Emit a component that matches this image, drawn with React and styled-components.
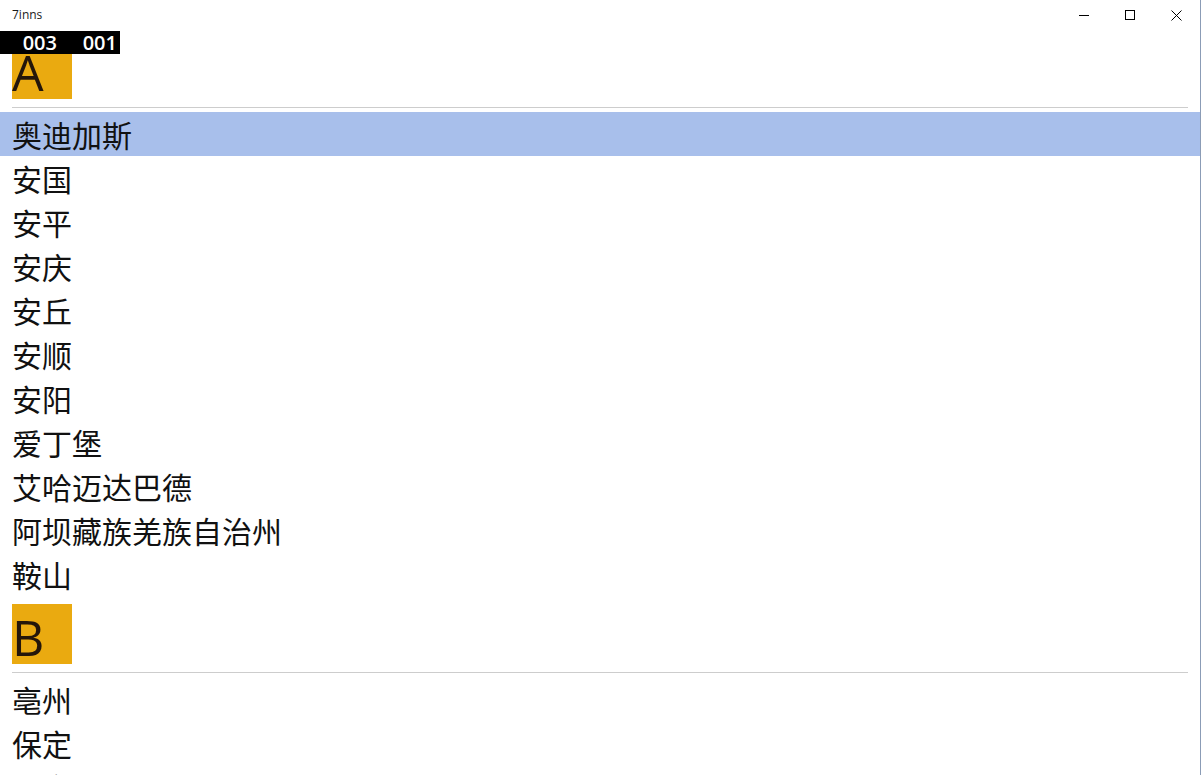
import React, { useState } from "react";
import styled, { createGlobalStyle } from "styled-components";

const GlobalStyle = createGlobalStyle`
  html, body {
    margin: 0;
    padding: 0;
    background: #ffffff;
    overflow: hidden;
  }
  * {
    box-sizing: border-box;
  }
`;

const Window = styled.div`
  width: 1201px;
  height: 775px;
  position: relative;
  overflow: hidden;
  background: #ffffff;
  border-right: 1px solid #8b9cb6;
  font-family: "Noto Sans CJK SC", "Noto Sans", sans-serif;
`;

const TitleBar = styled.div`
  height: 31px;
  display: flex;
  align-items: center;
  justify-content: space-between;
`;

const Title = styled.div`
  padding-left: 12px;
  padding-bottom: 2px;
  font-family: "Open Sans", "Noto Sans", sans-serif;
  font-size: 12px;
  color: #1a1a1a;
`;

const Controls = styled.div`
  display: flex;
  height: 31px;
  margin-right: 1px;
`;

const ControlBtn = styled.div`
  width: 46px;
  height: 30px;
  display: flex;
  align-items: center;
  justify-content: center;
`;

const Counter = styled.div`
  position: absolute;
  top: 31px;
  left: 0;
  width: 120px;
  height: 23px;
  background: #000000;
  display: flex;
  z-index: 5;
`;

const CounterCell = styled.div`
  width: 60px;
  text-align: right;
  padding-right: 3px;
  color: #ffffff;
  font-family: "Open Sans", "Noto Sans", sans-serif;
  font-weight: 600;
  font-size: 20px;
  line-height: 23px;
`;

const List = styled.div`
  display: flex;
  flex-direction: column;
`;

const GroupHeader = styled.div`
  padding: 8px 12px 4px 12px;
  display: flex;
  flex-direction: column;
  gap: 8px;
`;

const LetterBox = styled.div`
  width: 60px;
  height: 60px;
  background: #eaaa10;
  color: #24160a;
  font-family: "Open Sans", "Noto Sans", sans-serif;
  font-size: 50px;
  line-height: 1;
  display: flex;
  align-items: flex-end;
  padding-left: 0px;
  padding-bottom: 2px;
`;

const Rule = styled.div`
  height: 1px;
  background: #cdcdcd;
`;

const Row = styled.div`
  height: 44px;
  padding-left: 12px;
  display: flex;
  align-items: center;
  font-size: 30px;
  color: #111111;
  background: ${(p) => (p.selected ? "#a8bfeb" : "transparent")};
`;

const groups = [
  {
    letter: "A",
    items: [
      "奥迪加斯",
      "安国",
      "安平",
      "安庆",
      "安丘",
      "安顺",
      "安阳",
      "爱丁堡",
      "艾哈迈达巴德",
      "阿坝藏族羌族自治州",
      "鞍山",
    ],
  },
  {
    letter: "B",
    items: ["亳州", "保定", "北京", "包头"],
  },
];

const MinIcon = () => (
  <svg width="10" height="10" viewBox="0 0 10 10">
    <line x1="0" y1="5.5" x2="10" y2="5.5" stroke="#000" strokeWidth="1" />
  </svg>
);

const MaxIcon = () => (
  <svg width="10" height="10" viewBox="0 0 10 10">
    <rect x="0.5" y="0.5" width="9" height="9" fill="none" stroke="#000" strokeWidth="1" />
  </svg>
);

const CloseIcon = () => (
  <svg width="11" height="11" viewBox="0 0 11 11">
    <path d="M0.5 0.5 L10.5 10.5 M10.5 0.5 L0.5 10.5" stroke="#000" strokeWidth="1" />
  </svg>
);

const App = () => {
  const [selected, setSelected] = useState("奥迪加斯");

  return (
    <Window>
      <GlobalStyle />
      <TitleBar>
        <Title>7inns</Title>
        <Controls>
          <ControlBtn>
            <MinIcon />
          </ControlBtn>
          <ControlBtn>
            <MaxIcon />
          </ControlBtn>
          <ControlBtn>
            <CloseIcon />
          </ControlBtn>
        </Controls>
      </TitleBar>
      <Counter>
        <CounterCell>003</CounterCell>
        <CounterCell>001</CounterCell>
      </Counter>
      <List>
        {groups.map((g) => (
          <React.Fragment key={g.letter}>
            <GroupHeader>
              <LetterBox>{g.letter}</LetterBox>
              <Rule />
            </GroupHeader>
            {g.items.map((name) => (
              <Row
                key={name}
                selected={name === selected}
                onClick={() => setSelected(name)}
              >
                {name}
              </Row>
            ))}
          </React.Fragment>
        ))}
      </List>
    </Window>
  );
};

export default App;
